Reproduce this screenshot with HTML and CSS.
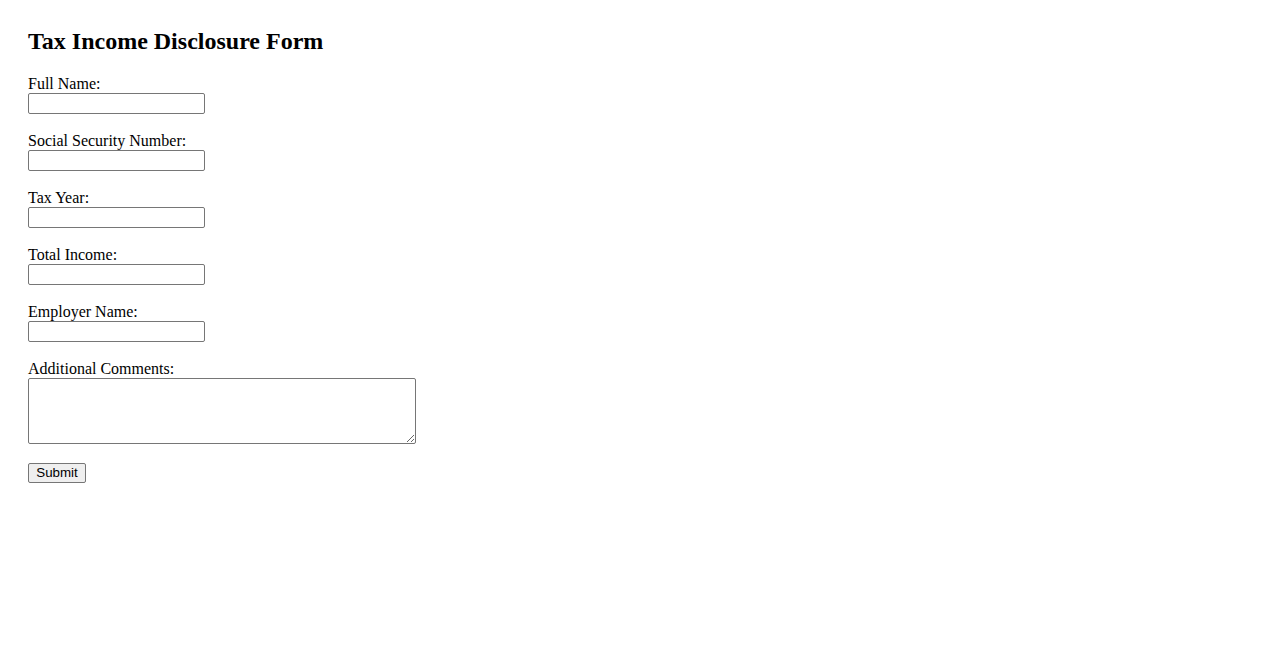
FILE: index.html
```html
<!DOCTYPE html>
<html lang="en">
<head>
<meta charset="utf-8">
<title>Tax Income Disclosure Form</title>
<link rel="stylesheet" href="styles.css">
</head>
<body>
<h2 class="title">Tax Income Disclosure Form</h2>
<form class="form">
  <div class="field">
    <label class="label" for="fullname">Full Name:</label>
    <input class="input" type="text" id="fullname">
  </div>
  <div class="field">
    <label class="label" for="ssn">Social Security Number:</label>
    <input class="input" type="text" id="ssn">
  </div>
  <div class="field">
    <label class="label" for="year">Tax Year:</label>
    <input class="input" type="text" id="year">
  </div>
  <div class="field">
    <label class="label" for="income">Total Income:</label>
    <input class="input" type="text" id="income">
  </div>
  <div class="field">
    <label class="label" for="employer">Employer Name:</label>
    <input class="input" type="text" id="employer">
  </div>
  <div class="field field-area">
    <label class="label" for="comments">Additional Comments:</label>
    <textarea class="textarea" id="comments"></textarea>
  </div>
  <div class="actions">
    <button class="button" type="submit">Submit</button>
  </div>
</form>
</body>
</html>
```
FILE: styles.css
```css
html, body {
  background: #ffffff;
}
body {
  margin: 0;
  padding: 27px 28px 28px 28px;
  font-family: "Liberation Serif", "Times New Roman", serif;
  font-size: 16px;
  color: #000000;
}
.title {
  margin: 0 0 20px 0;
  font-size: 24px;
  font-weight: bold;
  line-height: 28px;
}
.form {
  display: flex;
  flex-direction: column;
  align-items: flex-start;
}
.field {
  display: flex;
  flex-direction: column;
  align-items: flex-start;
  margin-bottom: 18px;
}
.field-area {
  margin-bottom: 19px;
}
.label {
  display: block;
  height: 18px;
  line-height: 18px;
}
.input {
  box-sizing: border-box;
  width: 177px;
  height: 21px;
  margin: 0;
  padding: 1px 2px;
  border: 1px solid #767676;
  border-radius: 2px;
  background: #ffffff;
  font-family: "Liberation Sans", Arial, sans-serif;
  font-size: 13.33px;
}
.textarea {
  box-sizing: border-box;
  width: 388px;
  height: 66px;
  margin: 0;
  padding: 2px;
  border: 1px solid #767676;
  border-radius: 2px;
  background: #ffffff;
  font-family: "Liberation Mono", monospace;
  font-size: 13.33px;
  resize: both;
}
.actions {
  display: flex;
}
.button {
  box-sizing: border-box;
  width: 58px;
  height: 20px;
  margin: 0;
  padding: 0 6px;
  border: 1px solid #767676;
  border-radius: 2px;
  background: #efefef;
  color: #000000;
  font-family: "Liberation Sans", Arial, sans-serif;
  font-size: 13.33px;
  line-height: 16px;
}
```
